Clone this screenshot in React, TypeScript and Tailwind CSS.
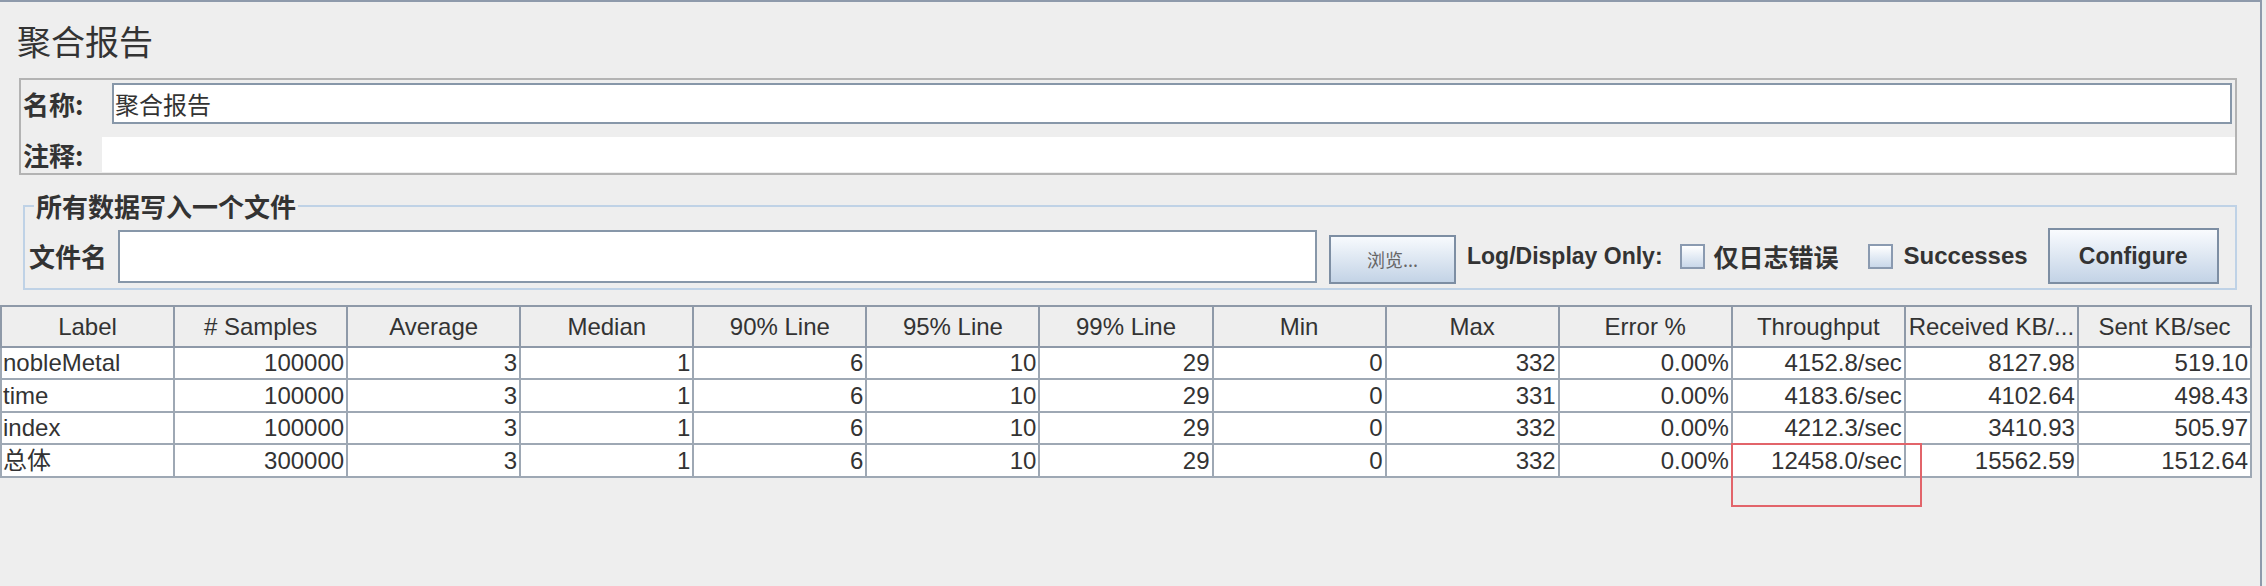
import React from "react";

const columns = [
  "Label",
  "# Samples",
  "Average",
  "Median",
  "90% Line",
  "95% Line",
  "99% Line",
  "Min",
  "Max",
  "Error %",
  "Throughput",
  "Received KB/...",
  "Sent KB/sec",
];

const rows = [
  ["nobleMetal", "100000", "3", "1", "6", "10", "29", "0", "332", "0.00%", "4152.8/sec", "8127.98", "519.10"],
  ["time", "100000", "3", "1", "6", "10", "29", "0", "331", "0.00%", "4183.6/sec", "4102.64", "498.43"],
  ["index", "100000", "3", "1", "6", "10", "29", "0", "332", "0.00%", "4212.3/sec", "3410.93", "505.97"],
  ["总体", "300000", "3", "1", "6", "10", "29", "0", "332", "0.00%", "12458.0/sec", "15562.59", "1512.64"],
];

const rowHeights = ["h-[32px]", "h-[33px]", "h-[32px]", "h-[33px]"];

const Checkbox: React.FC = () => (
  <span className="inline-block h-[25px] w-[25px] shrink-0 border-2 border-[#8a9ab0] bg-linear-to-b from-white to-[#c9d8ea]" />
);

const App: React.FC = () => {
  return (
    <div className="min-h-[586px] w-full bg-[#eeeeee] font-['Liberation_Sans','Noto_Sans_CJK_SC',sans-serif] text-[#333333]">
      <div className="h-[586px] w-[2262px] border-t-2 border-r-2 border-[#8e9aab]">
        {/* title */}
        <h1 className="ml-[17px] mt-[22px] font-['Noto_Sans_CJK_SC',sans-serif] text-[34px] leading-none font-normal text-[#333333]">
          聚合报告
        </h1>

        {/* name / comment */}
        <div className="ml-[19px] mt-[20px] h-[97px] w-[2218px] border-2 border-[#b3b3b3] pt-[3px]">
          <div className="flex h-[41px] items-center">
            <span className="w-[91px] pl-[2px] font-['Noto_Sans_CJK_SC',sans-serif] text-[26px] leading-none font-bold">
              名称:
            </span>
            <div className="flex h-[41px] w-[2120px] items-center border-2 border-[#8797a9] bg-white pl-[1px] font-['Noto_Sans_CJK_SC',sans-serif] text-[24px] leading-none">
              聚合报告
            </div>
          </div>
          <div className="mt-[13px] flex h-[35px] items-center">
            <span className="w-[81px] pl-[2px] font-['Noto_Sans_CJK_SC',sans-serif] text-[26px] leading-none font-bold">
              注释:
            </span>
            <div className="h-[35px] flex-1 bg-white" />
          </div>
        </div>

        {/* write results to file */}
        <fieldset className="ml-[23px] mt-[18px] w-[2214px] border-2 border-[#bfd2e6] pb-[4px] pl-[4px]">
          <legend className="ml-[5px] px-[2px] font-['Noto_Sans_CJK_SC',sans-serif] text-[26px] leading-none font-bold">
            所有数据写入一个文件
          </legend>
          <div className="mt-[9px] flex h-[56px] items-center">
            <span className="font-['Noto_Sans_CJK_SC',sans-serif] text-[26px] leading-none font-bold">文件名</span>
            <div className="ml-[11px] h-[53px] w-[1199px] border-2 border-[#8797a9] bg-white" />
            <button className="ml-[12px] mt-[6px] flex h-[49px] w-[127px] items-center justify-center border-2 border-[#7d8ea3] bg-linear-to-b from-[#f7fafd] to-[#c3d3e6] font-['Noto_Sans_CJK_SC',sans-serif] text-[18px] text-[#666666]">
              浏览...
            </button>
            <span className="ml-[11px] text-[23px] font-bold">Log/Display Only:</span>
            <span className="ml-[17px] flex items-center">
              <Checkbox />
            </span>
            <span className="ml-[9px] font-['Noto_Sans_CJK_SC',sans-serif] text-[25px] leading-none font-bold">仅日志错误</span>
            <span className="ml-[29px] flex items-center">
              <Checkbox />
            </span>
            <span className="ml-[11px] text-[24px] font-bold">Successes</span>
            <button className="ml-[20px] flex h-[56px] w-[171px] items-center justify-center border-2 border-[#7d8ea3] bg-linear-to-b from-[#f9fbfe] to-[#c3d3e6] text-[23px] font-bold">
              Configure
            </button>
          </div>
        </fieldset>

        {/* results table */}
        <div className="relative mt-[15px] w-[2252px]">
          <div className="grid grid-cols-[repeat(13,minmax(0,1fr))] border-t-2 border-l-2 border-[#8e99a8] bg-[#eeeeee]">
            {columns.map((c) => (
              <div
                key={c}
                className="flex h-[41px] items-center justify-center overflow-hidden whitespace-nowrap border-r-2 border-b-2 border-[#8e99a8] text-[24px] leading-none"
              >
                {c}
              </div>
            ))}
          </div>
          {rows.map((r, i) => (
            <div key={r[0]} className="grid grid-cols-[repeat(13,minmax(0,1fr))] border-l-2 border-[#9ea8b4] bg-white">
              {r.map((v, j) => (
                <div
                  key={j}
                  className={`flex ${rowHeights[i]} items-center whitespace-nowrap border-r-2 border-b-2 border-[#9ea8b4] text-[24px] leading-none ${
                    j === 0 ? "justify-start pl-[1px]" : "justify-end pr-[2px]"
                  }`}
                >
                  {v}
                </div>
              ))}
            </div>
          ))}

          {/* highlight drawn over the total throughput */}
          <div className="pointer-events-none absolute left-[1731px] top-[138px] h-[64px] w-[191px] border-2 border-[#e2646a]" />
        </div>
      </div>
    </div>
  );
};

export default App;
